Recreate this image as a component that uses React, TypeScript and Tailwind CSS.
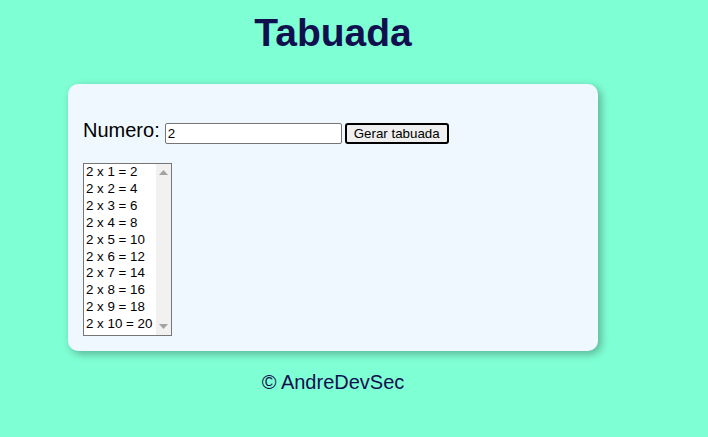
import { useState } from 'react';

const font = { fontFamily: '"Liberation Sans", Arial, sans-serif' };

export default function App() {
  const [numero, setNumero] = useState('2');
  const [linhas, setLinhas] = useState<string[]>(
    Array.from({ length: 10 }, (_, i) => `2 x ${i + 1} = ${2 * (i + 1)}`)
  );

  const gerar = () => {
    const n = Number(numero);
    if (!numero || isNaN(n)) return;
    setLinhas(Array.from({ length: 10 }, (_, i) => `${n} x ${i + 1} = ${n * (i + 1)}`));
  };

  return (
    <div className="min-h-[437px] w-full bg-[#7fffd4] font-['Liberation_Sans',Arial,sans-serif]" style={font}>
      <div className="ml-[68px] w-[530px] flex flex-col items-center">
        {/* Titulo */}
        <h1 className="mt-[11px] text-[39px] leading-[44px] font-bold text-[#10104f]">Tabuada</h1>

        {/* Card */}
        <section className="mt-[29px] w-full h-[267px] bg-[#f0f8ff] rounded-[10px] shadow-[3px_3px_8px_rgba(0,0,0,0.3)] pl-[15px] pt-[33px]">
          <div className="flex items-start">
            <label className="mt-[2px] text-[20px] leading-[23px] text-black">Numero:</label>
            <input
              value={numero}
              onChange={(e) => setNumero(e.target.value)}
              className="ml-[5px] mt-[6px] w-[177px] h-[21px] border border-[#767676] rounded-[2px] bg-white px-[2px] text-[13.33px] text-black outline-none"
            />
            <button
              onClick={gerar}
              className="ml-[3px] mt-[6px] w-[104px] h-[21px] border-2 border-black rounded-[3px] bg-[#efefef] text-[13.33px] leading-none text-black"
            >
              Gerar tabuada
            </button>
          </div>

          {/* Lista */}
          <div className="mt-[19px] w-[89px] h-[173px] border border-[#767676] bg-white flex">
            <ul className="flex-1 text-[13.33px] leading-[16.9px] text-black pl-[2px]">
              {linhas.map((l) => (
                <li key={l} className="whitespace-nowrap">{l}</li>
              ))}
            </ul>
            <div className="w-[15px] bg-[#f1f1f1] flex flex-col justify-between items-center py-[6px]">
              <svg width="9" height="5" viewBox="0 0 9 5"><path d="M0 5 L4.5 0 L9 5 Z" fill="#a3a3a3" /></svg>
              <svg width="9" height="5" viewBox="0 0 9 5"><path d="M0 0 L4.5 5 L9 0 Z" fill="#a3a3a3" /></svg>
            </div>
          </div>
        </section>

        {/* Rodape */}
        <footer className="mt-[20px] text-[20px] leading-[23px] text-[#10104f]">© AndreDevSec</footer>
      </div>
    </div>
  );
}
